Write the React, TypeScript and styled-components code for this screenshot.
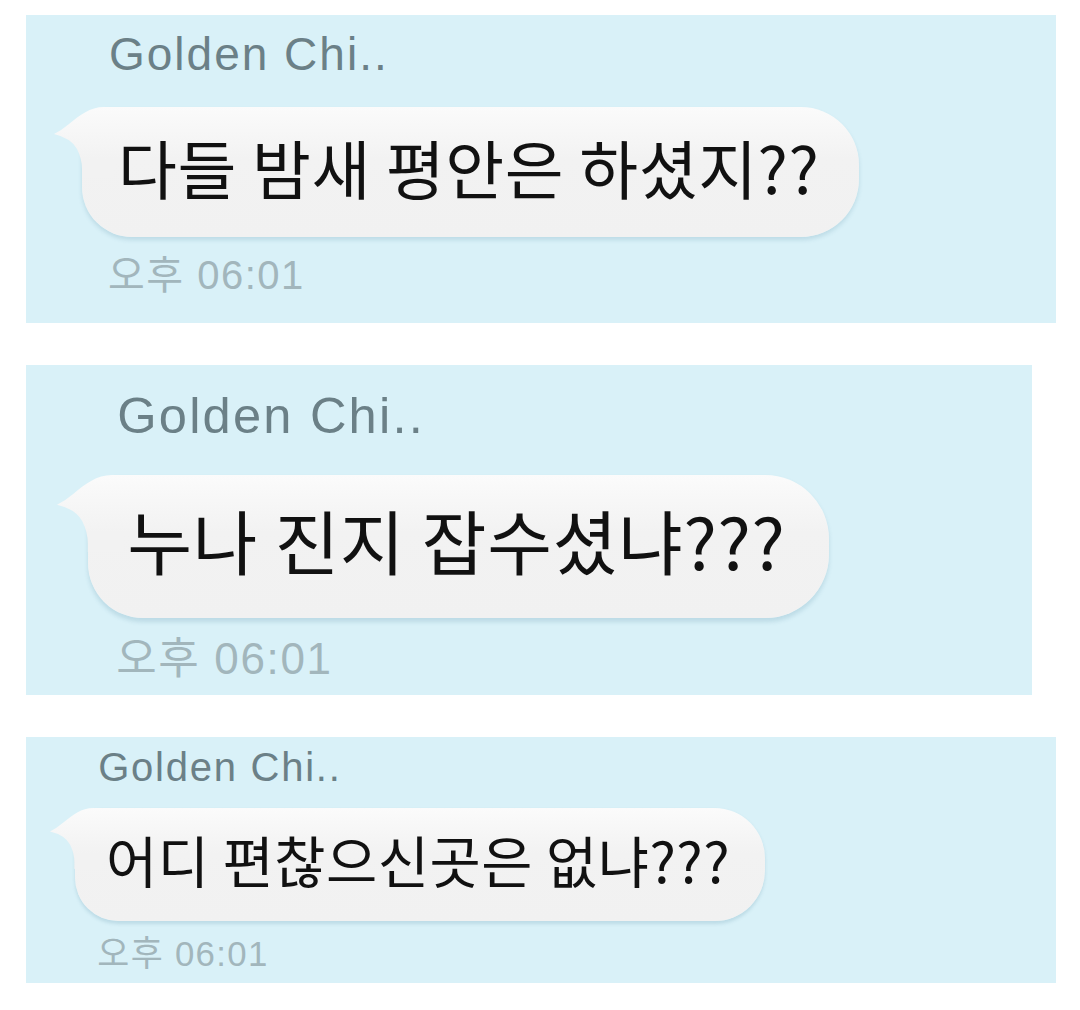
import React from "react";
import styled, { createGlobalStyle } from "styled-components";

const GlobalStyle = createGlobalStyle`
  html, body {
    margin: 0;
    padding: 0;
    background: #ffffff;
  }
`;

const Page = styled.div`
  display: flex;
  flex-direction: column;
  align-items: flex-start;
  gap: 42px;
  padding: 15px 0 0 26px;
`;

const Panel = styled.section<{ $w: number; $h: number; $top: number; $s: number }>`
  box-sizing: border-box;
  width: ${(p) => p.$w}px;
  height: ${(p) => p.$h}px;
  padding: ${(p) => p.$top}px 0 0 ${(p) => 56 * p.$s}px;
  background: #d9f1f8;
  display: flex;
  flex-direction: column;
  align-items: flex-start;
`;

const Name = styled.div<{ $s: number }>`
  font-family: "Liberation Sans", Arial, sans-serif;
  font-size: ${(p) => 46 * p.$s}px;
  line-height: 1;
  letter-spacing: ${(p) => 2 * p.$s}px;
  color: #6b8087;
  margin-left: ${(p) => 27 * p.$s}px;
  white-space: nowrap;
`;

const Bubble = styled.div<{ $s: number; $gap: number }>`
  position: relative;
  box-sizing: border-box;
  height: ${(p) => 130 * p.$s}px;
  margin-top: ${(p) => p.$gap}px;
  padding: 0 ${(p) => 40 * p.$s}px ${(p) => 13 * p.$s}px ${(p) => 36 * p.$s}px;
  display: flex;
  align-items: center;
  border-radius: ${(p) => `${30 * p.$s}px ${58 * p.$s}px ${58 * p.$s}px ${50 * p.$s}px`};
  background: linear-gradient(#fbfbfb, #f2f2f2 40%, #f1f1f1);
  box-shadow: 0 ${(p) => 3 * p.$s}px ${(p) => 4 * p.$s}px rgba(60, 120, 150, 0.18);
  font-family: "Noto Sans CJK KR", "Liberation Sans", sans-serif;
  font-size: ${(p) => 64 * p.$s}px;
  letter-spacing: ${(p) => 0.6 * p.$s}px;
  color: #111111;
  white-space: nowrap;
`;

const Tail = styled.svg<{ $s: number }>`
  position: absolute;
  left: ${(p) => -28 * p.$s}px;
  top: 0;
  width: ${(p) => 60 * p.$s}px;
  height: ${(p) => 70 * p.$s}px;
`;

const Message = styled.span`
  position: relative;
`;

const Time = styled.div<{ $s: number }>`
  font-family: "Liberation Sans", "Noto Sans CJK KR", sans-serif;
  font-size: ${(p) => 40 * p.$s}px;
  line-height: 1;
  letter-spacing: ${(p) => 1.5 * p.$s}px;
  color: #a2b6bc;
  margin-top: ${(p) => 18 * p.$s}px;
  margin-left: ${(p) => 26 * p.$s}px;
  white-space: nowrap;
`;

const messages = [
  { w: 1030, h: 308, top: 16, s: 1, gap: 30, text: "다들 밤새 평안은 하셨지??" },
  { w: 1006, h: 330, top: 26, s: 1.1, gap: 33, text: "누나 진지 잡수셨냐???" },
  { w: 1030, h: 246, top: 10, s: 0.87, gap: 21, text: "어디 편찮으신곳은 없냐???" },
];

function App() {
  return (
    <>
      <GlobalStyle />
      <Page>
        {messages.map((m, i) => (
          <Panel key={i} $w={m.w} $h={m.h} $top={m.top} $s={m.s}>
            <Name $s={m.s}>Golden Chi..</Name>
            <Bubble $s={m.s} $gap={m.gap}>
              <Tail $s={m.s} viewBox="0 0 60 70">
                <defs>
                  <linearGradient id={`tail${i}`} x1="0" y1="0" x2="0" y2="52" gradientUnits="userSpaceOnUse">
                    <stop offset="0" stopColor="#fbfbfb" />
                    <stop offset="1" stopColor="#f2f2f2" />
                  </linearGradient>
                </defs>
                <path
                  d="M60 0 L50 0 C36 0 26 8 15 17 Q8 23 0 27 Q17 31 23 42 Q28 52 28 62 L28 70 L60 70 Z"
                  fill={`url(#tail${i})`}
                />
              </Tail>
              <Message>{m.text}</Message>
            </Bubble>
            <Time $s={m.s}>오후 06:01</Time>
          </Panel>
        ))}
      </Page>
    </>
  );
}

export default App;
